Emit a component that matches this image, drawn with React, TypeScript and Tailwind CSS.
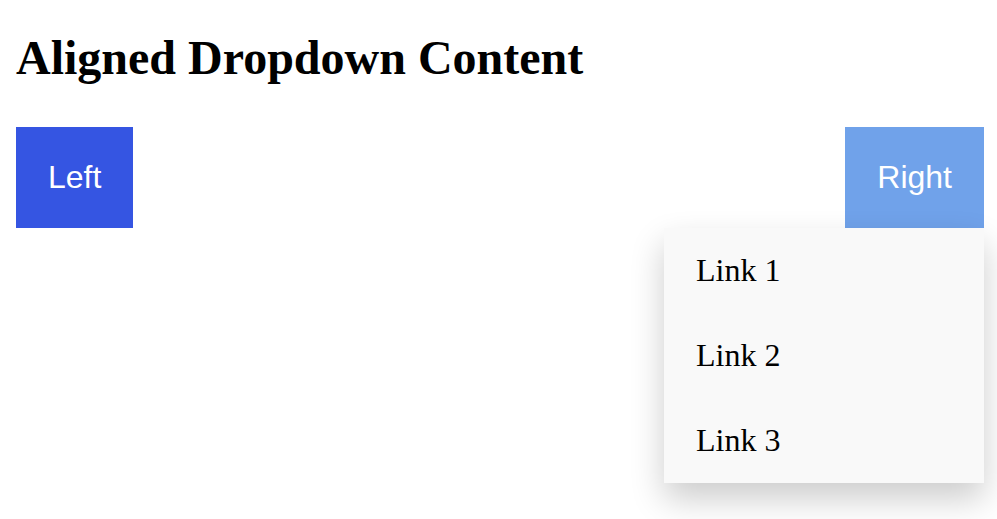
import React from 'react';

const links = ['Link 1', 'Link 2', 'Link 3'];

const App: React.FC = () => {
  return (
    <div className="min-h-[519px] bg-white pl-4 pr-[13px] font-['Liberation_Serif',serif] text-black">
      <h2 className="pt-[30px] mb-[42px] text-[48px] leading-[55px] font-bold">Aligned Dropdown Content</h2>
      <div className="flex justify-between items-start">
        <button className="bg-[#3555e2] px-8 py-8 text-[32px] leading-[37px] text-white font-['Liberation_Sans',Arial,sans-serif]">
          Left
        </button>
        <div className="relative">
          <button className="bg-[#70a2ea] px-8 py-8 text-[32px] leading-[37px] text-white font-['Liberation_Sans',Arial,sans-serif]">
            Right
          </button>
          <div className="absolute right-0 top-full w-[320px] bg-[#f9f9f9] shadow-[0_16px_32px_rgba(0,0,0,0.2)]">
            {links.map((l) => (
              <a key={l} href="#" className="block px-8 py-6 text-[32px] leading-[37px] text-black">
                {l}
              </a>
            ))}
          </div>
        </div>
      </div>
    </div>
  );
};

export default App;
